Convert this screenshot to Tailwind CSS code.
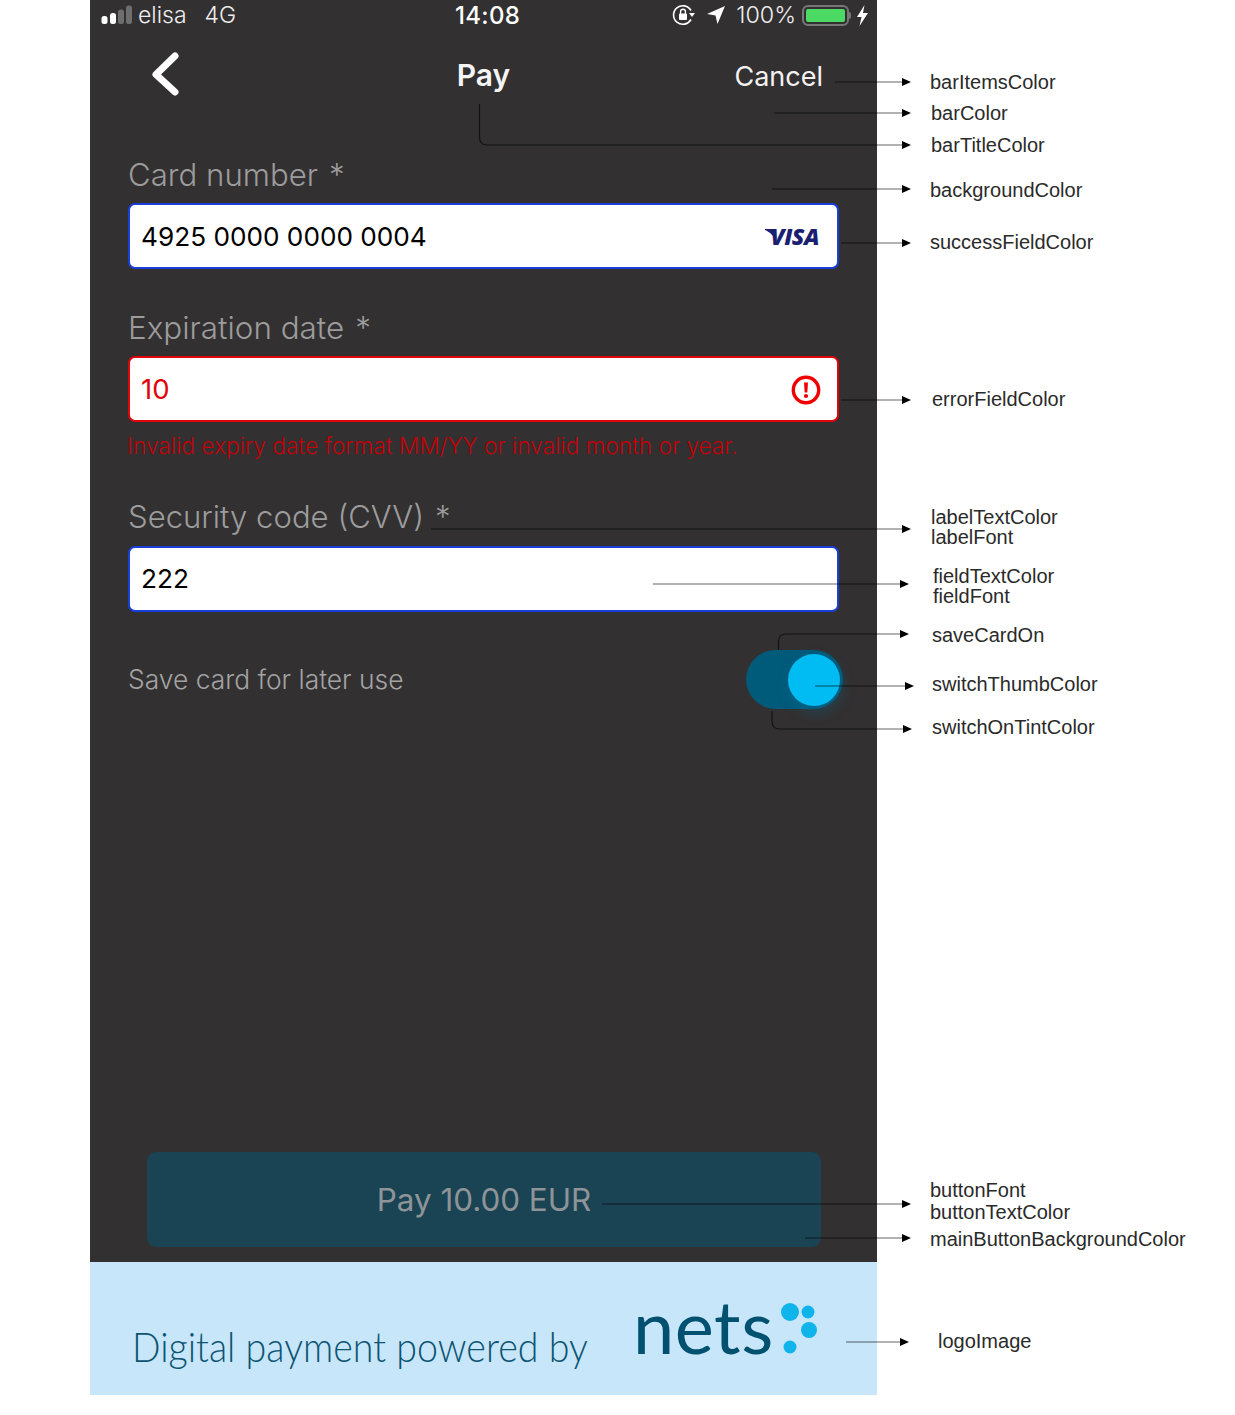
<!DOCTYPE html>
<html>
<head>
<meta charset="utf-8">
<script src="https://cdn.jsdelivr.net/npm/@tailwindcss/browser@4"></script>
</head>
<body class="bg-white">
<div class="relative w-[1235px] h-[1415px] overflow-hidden bg-white font-['Liberation_Sans',sans-serif]">
  <div class="ml-[90px] w-[787px] h-[1395px] flex flex-col bg-[#323031] font-['Inter',sans-serif]">
    <!-- status bar -->
    <div class="relative h-[30px] flex items-center pl-[11px] pr-[8px] text-[#eeeeee] text-[23px]">
      <svg width="32" height="20" viewBox="0 0 32 20" class="mr-[5px] mt-[-1px]"><rect x="0.5" y="11" width="6" height="8" rx="2.5" fill="#fff"/><rect x="9" y="8" width="6" height="11" rx="2.5" fill="#fff"/><rect x="17" y="4.5" width="6" height="14.5" rx="2.5" fill="#6f6e6f"/><rect x="25" y="0.5" width="6" height="18.5" rx="2.5" fill="#6f6e6f"/></svg>
      <span class="font-light">elisa</span>
      <span class="ml-[18px] font-light">4G</span>
      <span class="absolute left-[365px] top-[-2px] w-[64px] text-center font-medium text-[24px] tracking-[0.3px] text-white">14:08</span>
      <div class="ml-auto flex items-center">
        <svg width="24" height="22" viewBox="0 0 24 22" class="mr-[10px]"><path d="M19 6.5 A9.3 9.3 0 1 0 19 15.5" fill="none" stroke="#fff" stroke-width="1.6"/><path d="M17 9 L23 9 L20 13 Z" fill="#fff"/><rect x="7" y="9.5" width="8" height="6.5" rx="1" fill="#fff"/><path d="M8.6 10 V7.6 a2.4 2.4 0 0 1 4.8 0 V10" fill="none" stroke="#fff" stroke-width="1.4"/></svg>
        <svg width="20" height="20" viewBox="0 0 20 20" class="mr-[10px]"><path d="M19 1 L11.5 19 L9.5 10.5 L1 9 Z" fill="#fff"/></svg>
        <span class="font-light text-[23.3px] mr-[6px]">100%</span>
        <div class="w-[47px] h-[21px] border-2 border-[#777777] rounded-[6px] p-[2px]"><div class="w-full h-full rounded-[2px] bg-[#4cd964]"></div></div>
        <div class="w-[2px] h-[7px] bg-[#777777] rounded-r-[2px] mr-[5px]"></div>
        <svg width="13" height="21" viewBox="0 0 13 21"><path d="M8.5 0 L1 12 H5.5 L3.5 21 L12 8 H7 Z" fill="#fff"/></svg>
      </div>
    </div>
    <!-- nav bar -->
    <div class="relative h-[90px] flex items-center justify-center">
      <svg width="30" height="44" viewBox="0 0 30 44" class="absolute left-[59px] top-[22px]"><path d="M26 4 L7 22.5 L26 40" fill="none" stroke="#fff" stroke-width="7" stroke-linecap="round" stroke-linejoin="round"/></svg>
      <span class="text-[30px] font-semibold text-[#f4f4f4]">Pay</span>
      <span class="absolute right-[54px] top-[27px] text-[27px] text-[#f2f2f2] font-normal">Cancel</span>
    </div>
    <!-- form -->
    <div class="flex-1 flex flex-col px-[38px] pt-[32px]">
      <label class="h-[46px] mb-[5px] flex items-center text-[31.2px] font-light text-[#9c9c9c] whitespace-pre">Card number<span class="ml-[11px]">*</span></label>
      <div class="h-[66px] pt-[1px] flex items-center justify-between pl-[11px] pr-[18px] bg-white border-2 border-[#1a3fd8] rounded-[7px] text-black text-[26.2px]">
        <span>4925 0000 0000 0004</span>
        <div class="relative flex items-center">
          <svg width="12" height="14" viewBox="0 0 12 14" class="absolute left-[-1px] top-[4px]"><path d="M0 0 H8 L11 13 C9 7 5 3 0 1 Z" fill="#1a1f71"/></svg>
          <span class="pl-[5px] font-['Open_Sans',sans-serif] italic font-extrabold text-[23px] leading-none tracking-[-0.5px] text-[#1a1f71]">VISA</span>
        </div>
      </div>
      <label class="mt-[36px] h-[46px] mb-[5px] pt-[2px] flex items-center text-[31.4px] font-light text-[#9c9c9c] whitespace-pre">Expiration date<span class="ml-[11px]">*</span></label>
      <div class="h-[66px] pt-[1px] flex items-center justify-between pl-[11px] pr-[16px] bg-white border-2 border-[#e0040b] rounded-[7px] text-[#e0040b] text-[27.5px]">
        <span>10</span>
        <svg width="30" height="30" viewBox="0 0 30 30"><circle cx="15" cy="15" r="12.7" fill="none" stroke="#ee0000" stroke-width="3.4"/><path d="M13 7.5 H17 L16.3 17.5 H13.7 Z" fill="#ee0000"/><circle cx="15" cy="21" r="2.1" fill="#ee0000"/></svg>
      </div>
      <p class="mt-[9px] ml-[-1px] h-[30px] flex items-center text-[22.65px] font-light text-[#c40008] whitespace-nowrap">Invalid expiry date format MM/YY or invalid month or year.</p>
      <label class="mt-[33px] h-[46px] mb-[6px] flex items-center text-[31.1px] font-light text-[#9c9c9c] whitespace-pre">Security code (CVV)<span class="ml-[11px]">*</span></label>
      <div class="h-[66px] flex items-center pl-[11px] bg-white border-2 border-[#1a3fd8] rounded-[7px] text-black text-[26.2px]">222</div>
      <div class="mt-[38px] h-[59px] flex items-center justify-between">
        <span class="text-[26.4px] font-light text-[#a3a3a3]">Save card for later use</span>
        <div class="mr-[-4px] w-[97px] h-[59px] flex items-center justify-end pr-[3px] rounded-full bg-[#005a7a]">
          <div class="w-[52px] h-[52px] rounded-full bg-[#00bcf2] shadow-[2px_6px_14px_rgba(0,120,160,0.3)]"></div>
        </div>
      </div>
      <div class="flex-1"></div>
      <button class="ml-[19px] mr-[18px] mb-[15px] h-[95px] pt-[3px] flex items-center justify-center rounded-[9px] bg-[#1a4454] text-[31.4px] text-[#8e9498]">Pay 10.00 EUR</button>
    </div>
    <!-- footer -->
    <div class="relative h-[133px] bg-[#c7e6fa] text-[#0c5472]">
      <span class="absolute left-[42px] top-[60px] font-['Lato',sans-serif] font-light text-[37.6px] leading-[50px] whitespace-nowrap scale-y-[1.08]">Digital payment powered by</span>
      <span class="absolute left-[543px] top-[20px] font-['Lato',sans-serif] font-normal text-[#00506f] text-[74px] leading-[88px] tracking-[0.5px]">nets</span>
      <svg width="50" height="60" viewBox="0 0 50 60" class="absolute left-[680px] top-[35px]"><circle cx="20" cy="15" r="9" fill="#0fb4ea"/><circle cx="38" cy="15" r="6.5" fill="#0fb4ea"/><circle cx="39" cy="33" r="8" fill="#0fb4ea"/><circle cx="20" cy="50" r="6.5" fill="#0fb4ea"/></svg>
    </div>
  </div>

  <!-- annotation leader lines -->
  <svg width="1235" height="1415" viewBox="0 0 1235 1415" class="absolute inset-0 pointer-events-none">
    <g fill="none" stroke="#000" stroke-opacity="0.6" stroke-width="1.2">
      <path d="M835 82 H904"/>
      <path d="M774 113 H904"/>
      <path d="M479.5 104 V137 Q479.5 145 487 145 H904"/>
      <path d="M772 189 H904"/>
      <path d="M841 243 H904"/>
      <path d="M841 400 H904"/>
      <path d="M431 529 H904"/>
      <path d="M653 584 H902"/>
      <path d="M778.5 650 V642 Q778.5 634 786 634 H902"/>
      <path d="M815 686 H907"/>
      <path d="M772 711 V721 Q772 729 780 729 H905"/>
      <path d="M602 1204 H904"/>
      <path d="M805 1238 H904"/>
      <path d="M846 1342 H903"/>
    </g>
    <g fill="#000">
      <path d="M902 78 L911 82 L902 86 Z"/>
      <path d="M902 109 L911 113 L902 117 Z"/>
      <path d="M902 141 L911 145 L902 149 Z"/>
      <path d="M902 185 L911 189 L902 193 Z"/>
      <path d="M902 239 L911 243 L902 247 Z"/>
      <path d="M902 396 L911 400 L902 404 Z"/>
      <path d="M902 525 L911 529 L902 533 Z"/>
      <path d="M900 580 L909 584 L900 588 Z"/>
      <path d="M900 630 L909 634 L900 638 Z"/>
      <path d="M905 682 L914 686 L905 690 Z"/>
      <path d="M903 725 L912 729 L903 733 Z"/>
      <path d="M902 1200 L911 1204 L902 1208 Z"/>
      <path d="M902 1234 L911 1238 L902 1242 Z"/>
      <path d="M900 1338 L909 1342 L900 1346 Z"/>
    </g>
  </svg>

  <!-- annotation labels -->
  <div class="absolute inset-0 text-[20px] leading-[20px] text-[#2a2a2a]">
    <span class="absolute left-[930px] top-[72px]">barItemsColor</span>
    <span class="absolute left-[931px] top-[103px]">barColor</span>
    <span class="absolute left-[931px] top-[135px]">barTitleColor</span>
    <span class="absolute left-[930px] top-[180px]">backgroundColor</span>
    <span class="absolute left-[930px] top-[232px]">successFieldColor</span>
    <span class="absolute left-[932px] top-[389px]">errorFieldColor</span>
    <span class="absolute left-[931px] top-[507px]">labelTextColor<br>labelFont</span>
    <span class="absolute left-[933px] top-[566px]">fieldTextColor<br>fieldFont</span>
    <span class="absolute left-[932px] top-[625px]">saveCardOn</span>
    <span class="absolute left-[932px] top-[674px]">switchThumbColor</span>
    <span class="absolute left-[932px] top-[717px]">switchOnTintColor</span>
    <span class="absolute left-[930px] top-[1179px] leading-[22px]">buttonFont<br>buttonTextColor</span>
    <span class="absolute left-[930px] top-[1229px]">mainButtonBackgroundColor</span>
    <span class="absolute left-[938px] top-[1331px]">logoImage</span>
  </div>
</div>
</body>
</html>
